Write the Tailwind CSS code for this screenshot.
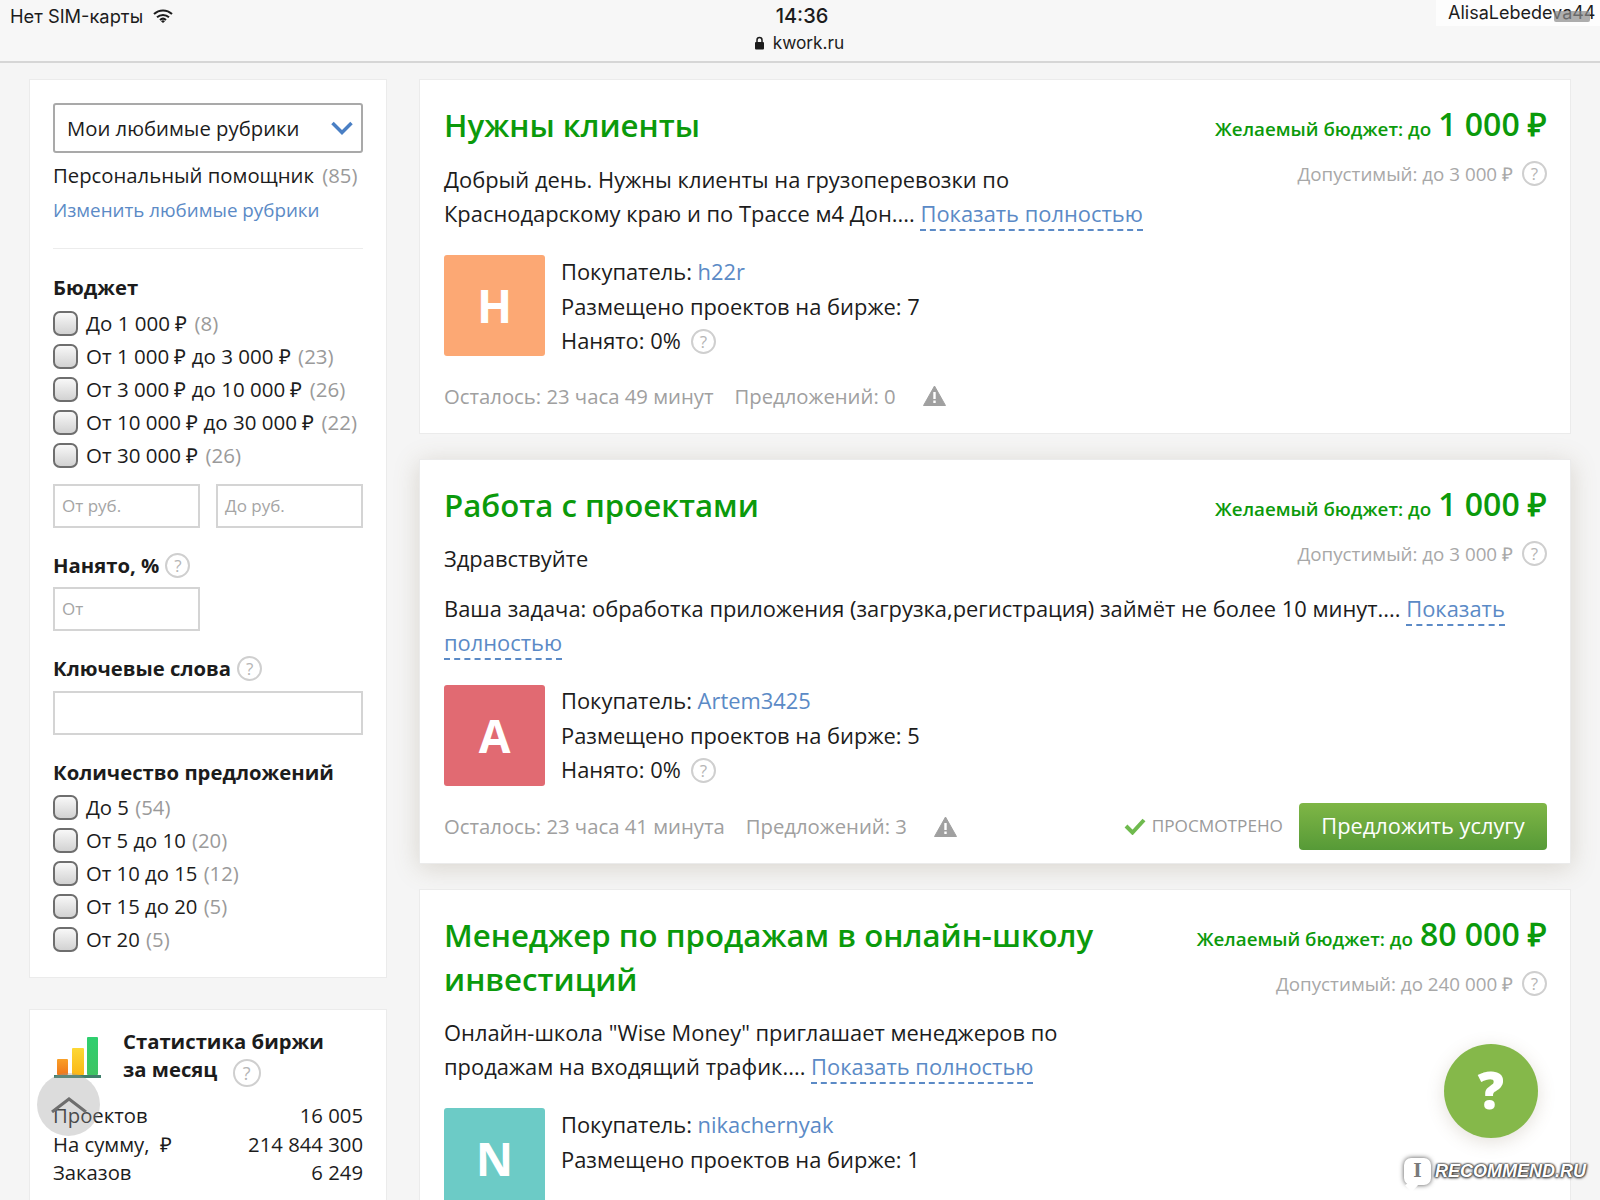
<!DOCTYPE html>
<html lang="ru">
<head>
  <meta charset="UTF-8">
  <title>Биржа проектов</title>
  <script src="https://cdn.jsdelivr.net/npm/@tailwindcss/browser@4"></script>
</head>
<body class="relative h-[1200px] w-[1600px] overflow-hidden bg-[#f5f5f5] font-['Open_Sans',sans-serif] text-[21.9px] leading-[34.5px] text-[#1c1c1c]">

  <!-- Safari status bar -->
  <header class="relative h-[63px] border-b-2 border-[#d6d6d6] bg-[#f7f7f7] font-['Inter',sans-serif]">
    <div class="flex items-center gap-[10px] pl-[10px] pt-[4px] text-[18.3px] leading-[24px]">
      <span>Нет SIM-карты</span>
      <svg class="h-[14px] w-[20px]" viewBox="0 0 20 14"><path d="M1 5a13 13 0 0 1 18 0M4 8.2a9 9 0 0 1 12 0M7 11a4.5 4.5 0 0 1 6 0" fill="none" stroke="#1c1c1c" stroke-width="2"/><path d="M8 12.2a3 3 0 0 1 4 0L10 14z" fill="#1c1c1c"/></svg>
    </div>
    <div class="absolute left-[746px] top-[3px] w-[112px] text-center text-[20px] font-medium leading-[26px]">14:36</div>
    <div class="absolute left-[699px] top-[30px] flex w-[200px] items-center justify-center gap-[8px] text-[17.3px] leading-[26px]">
      <svg class="h-[14px] w-[11px]" viewBox="0 0 11 14"><path d="M3 6V4a2.5 2.5 0 0 1 5 0v2" fill="none" stroke="#1c1c1c" stroke-width="1.5"/><rect x="1" y="6" width="9" height="7.5" rx="1" fill="#1c1c1c"/></svg>
      <span>kwork.ru</span>
    </div>
    <div class="absolute left-[1436px] top-0 w-[164px] bg-white/70 pl-[12px] text-[18px] leading-[26px]">AlisaLebedeva44</div>
    <div class="absolute left-[1554px] top-[11px] h-[11px] w-[36px] rounded-[2px] bg-[#8a8a8a]/70"></div>
  </header>

  <div class="flex items-start gap-[32px] pl-[29px] pt-[16px]">

    <!-- Sidebar -->
    <aside class="w-[358px] shrink-0 text-[20.3px]">
      <section class="h-[899px] border border-[#ebebeb] bg-white px-[23px] pt-[23px]">
        <div class="flex h-[50px] items-center justify-between rounded-[3px] border-2 border-[#a9a9a9] pl-[12px] pr-[8px]">
          <span>Мои любимые рубрики</span>
          <svg class="h-[14px] w-[22px]" viewBox="0 0 22 14"><path d="M1.5 2 11 11.5 20.5 2" fill="none" stroke="#4a7fc4" stroke-width="3.5"/></svg>
        </div>
        <div class="mt-[5px]">Персональный помощник <span class="ml-[3px] text-[#9a9a9a]">(85)</span></div>
        <a class="block text-[18.8px] leading-[35px] text-[#5b8ac6]">Изменить любимые рубрики</a>
        <hr class="mt-[20px] border-[#ececec]">

        <h3 class="mt-[21px] font-bold leading-[35px]">Бюджет</h3>
        <div class="mt-[2px] flex flex-col text-[20.5px]">
          <label class="flex h-[33px] items-center gap-[8px]"><span class="h-[25px] w-[25px] rounded-[7px] border-2 border-[#6e6e6e] bg-gradient-to-b from-[#f8f8f8] to-[#d2d2d2]"></span><span>До 1 000 ₽ <span class="ml-[2px] text-[#9a9a9a]">(8)</span></span></label>
          <label class="flex h-[33px] items-center gap-[8px]"><span class="h-[25px] w-[25px] rounded-[7px] border-2 border-[#6e6e6e] bg-gradient-to-b from-[#f8f8f8] to-[#d2d2d2]"></span><span>От 1 000 ₽ до 3 000 ₽ <span class="ml-[2px] text-[#9a9a9a]">(23)</span></span></label>
          <label class="flex h-[33px] items-center gap-[8px]"><span class="h-[25px] w-[25px] rounded-[7px] border-2 border-[#6e6e6e] bg-gradient-to-b from-[#f8f8f8] to-[#d2d2d2]"></span><span>От 3 000 ₽ до 10 000 ₽ <span class="ml-[2px] text-[#9a9a9a]">(26)</span></span></label>
          <label class="flex h-[33px] items-center gap-[8px]"><span class="h-[25px] w-[25px] rounded-[7px] border-2 border-[#6e6e6e] bg-gradient-to-b from-[#f8f8f8] to-[#d2d2d2]"></span><span>От 10 000 ₽ до 30 000 ₽ <span class="ml-[2px] text-[#9a9a9a]">(22)</span></span></label>
          <label class="flex h-[33px] items-center gap-[8px]"><span class="h-[25px] w-[25px] rounded-[7px] border-2 border-[#6e6e6e] bg-gradient-to-b from-[#f8f8f8] to-[#d2d2d2]"></span><span>От 30 000 ₽ <span class="ml-[2px] text-[#9a9a9a]">(26)</span></span></label>
        </div>
        <div class="mt-[12px] flex gap-[16px]">
          <div class="h-[44px] w-[147px] border-2 border-[#d4d4d4] pl-[7px] text-[17px] leading-[40px] text-[#a5a5a5]">От руб.</div>
          <div class="h-[44px] w-[147px] border-2 border-[#d4d4d4] pl-[7px] text-[17px] leading-[40px] text-[#a5a5a5]">До руб.</div>
        </div>

        <h3 class="mt-[20px] flex items-center gap-[6px] font-bold leading-[35px]">Нанято, %
          <span class="h-[25px] w-[25px] rounded-full border-2 border-[#cfcfcf] text-center text-[17px] font-normal leading-[21px] text-[#b5b5b5]">?</span>
        </h3>
        <div class="mt-[4px] h-[44px] w-[147px] border-2 border-[#d4d4d4] pl-[7px] text-[17px] leading-[40px] text-[#a5a5a5]">От</div>

        <h3 class="mt-[20px] flex items-center gap-[6px] font-bold leading-[35px]">Ключевые слова
          <span class="h-[25px] w-[25px] rounded-full border-2 border-[#cfcfcf] text-center text-[17px] font-normal leading-[21px] text-[#b5b5b5]">?</span>
        </h3>
        <div class="mt-[5px] h-[44px] w-full border-2 border-[#d4d4d4]"></div>

        <h3 class="mt-[20px] font-bold leading-[35px]">Количество предложений</h3>
        <div class="mt-[1px] flex flex-col">
          <label class="flex h-[33px] items-center gap-[8px]"><span class="h-[25px] w-[25px] rounded-[7px] border-2 border-[#6e6e6e] bg-gradient-to-b from-[#f8f8f8] to-[#d2d2d2]"></span><span>До 5 <span class="ml-[1px] text-[#9a9a9a]">(54)</span></span></label>
          <label class="flex h-[33px] items-center gap-[8px]"><span class="h-[25px] w-[25px] rounded-[7px] border-2 border-[#6e6e6e] bg-gradient-to-b from-[#f8f8f8] to-[#d2d2d2]"></span><span>От 5 до 10 <span class="ml-[1px] text-[#9a9a9a]">(20)</span></span></label>
          <label class="flex h-[33px] items-center gap-[8px]"><span class="h-[25px] w-[25px] rounded-[7px] border-2 border-[#6e6e6e] bg-gradient-to-b from-[#f8f8f8] to-[#d2d2d2]"></span><span>От 10 до 15 <span class="ml-[1px] text-[#9a9a9a]">(12)</span></span></label>
          <label class="flex h-[33px] items-center gap-[8px]"><span class="h-[25px] w-[25px] rounded-[7px] border-2 border-[#6e6e6e] bg-gradient-to-b from-[#f8f8f8] to-[#d2d2d2]"></span><span>От 15 до 20 <span class="ml-[1px] text-[#9a9a9a]">(5)</span></span></label>
          <label class="flex h-[33px] items-center gap-[8px]"><span class="h-[25px] w-[25px] rounded-[7px] border-2 border-[#6e6e6e] bg-gradient-to-b from-[#f8f8f8] to-[#d2d2d2]"></span><span>От 20 <span class="ml-[1px] text-[#9a9a9a]">(5)</span></span></label>
        </div>
      </section>

      <!-- Exchange stats -->
      <section class="mt-[31px] h-[300px] border border-[#ebebeb] bg-white px-[23px] pt-[17px]">
        <div class="flex gap-[22px]">
          <svg class="ml-[1px] mt-[10px] h-[41px] w-[47px] shrink-0" viewBox="0 0 47 41">
            <defs>
              <linearGradient id="barOrange" x1="0" y1="0" x2="0" y2="1"><stop offset="0" stop-color="#f9a028"/><stop offset="1" stop-color="#f0761a"/></linearGradient>
              <linearGradient id="barYellow" x1="0" y1="0" x2="0" y2="1"><stop offset="0" stop-color="#fdd835"/><stop offset="1" stop-color="#fbb716"/></linearGradient>
              <linearGradient id="barGreen" x1="0" y1="0" x2="0" y2="1"><stop offset="0" stop-color="#2fcf6f"/><stop offset="1" stop-color="#3fc463"/></linearGradient>
            </defs>
            <rect x="3" y="22" width="11" height="16" rx="1" fill="url(#barOrange)"/>
            <rect x="18" y="11" width="12" height="27" rx="1" fill="url(#barYellow)"/>
            <rect x="33" y="0" width="11" height="38" rx="1" fill="url(#barGreen)"/>
            <rect x="0" y="38" width="47" height="3" fill="#3f7f6b"/>
          </svg>
          <h3 class="font-bold leading-[28px]">Статистика биржи<br>за месяц
            <span class="ml-[10px] inline-block h-[28px] w-[28px] translate-y-[3px] rounded-full border-2 border-[#cfcfcf] text-center text-[18px] font-normal leading-[24px] text-[#b5b5b5]">?</span>
          </h3>
        </div>
        <div class="mt-[17px] leading-[28.5px]">
          <div class="flex justify-between"><span>Проектов</span><span>16 005</span></div>
          <div class="flex justify-between"><span>На сумму, &nbsp;₽</span><span>214 844 300</span></div>
          <div class="flex justify-between"><span>Заказов</span><span>6 249</span></div>
        </div>
      </section>
    </aside>

    <!-- Project list -->
    <main class="flex w-[1152px] shrink-0 flex-col">

      <article class="h-[355px] border border-[#ebebeb] bg-white pl-[24px] pr-[23px] pt-[23px]">
        <div class="flex items-start justify-between">
          <div class="w-[710px]">
            <h2 class="text-[31.2px] font-semibold leading-[44px] text-[#0b9a0b]">Нужны клиенты</h2>
            <p class="mt-[16px] leading-[34px]">Добрый день. Нужны клиенты на грузоперевозки по Краснодарскому краю и по Трассе м4 Дон.... <a class="border-b-2 border-dashed border-[#5b8ac6] pb-[1px] text-[#5b8ac6]">Показать полностью</a></p>
          </div>
          <div class="flex flex-col items-end">
            <div class="flex items-baseline gap-[7px] font-semibold text-[#0b9a0b]"><span class="text-[18.8px]">Желаемый бюджет: до</span><span class="text-[32px] leading-[42px]">1 000 ₽</span></div>
            <div class="mt-[13px] flex items-center gap-[9px] text-[18.8px] leading-[28px] text-[#a8a8a8]">Допустимый: до 3 000 ₽
              <span class="h-[25px] w-[25px] rounded-full border-2 border-[#cfcfcf] text-center text-[17px] leading-[21px] text-[#b5b5b5]">?</span>
            </div>
          </div>
        </div>
        <div class="mt-[24px] flex gap-[16px]">
          <div class="flex h-[101px] w-[101px] items-center justify-center rounded-[3px] bg-[#fca874] text-[46px] font-bold text-white">H</div>
          <div>
            <div>Покупатель: <a class="text-[#5b8ac6]">h22r</a></div>
            <div>Размещено проектов на бирже: 7</div>
            <div class="flex items-center gap-[10px]">Нанято: 0%
              <span class="h-[25px] w-[25px] rounded-full border-2 border-[#cfcfcf] text-center text-[17px] leading-[21px] text-[#b5b5b5]">?</span>
            </div>
          </div>
        </div>
        <div class="mt-[20px] flex items-center text-[20.3px] text-[#a0a0a0]">
          <span>Осталось: 23 часа 49 минут</span>
          <span class="ml-[21px]">Предложений: 0</span>
          <svg class="ml-[27px] h-[21px] w-[23px]" viewBox="0 0 23 21"><path d="M11.5 1 22.5 20.5H.5z" fill="#a0a0a0" stroke="#a0a0a0" stroke-linejoin="round"/><rect x="10.3" y="7" width="2.4" height="7" fill="#fff"/><rect x="10.3" y="15.5" width="2.4" height="2.5" fill="#fff"/></svg>
        </div>
      </article>

      <article class="mt-[25px] h-[405px] border border-[#ebebeb] bg-white pl-[24px] pr-[23px] pt-[23px] shadow-[0_4px_24px_rgba(120,100,70,0.22)]">
        <div class="flex items-start justify-between">
          <h2 class="text-[31.2px] font-semibold leading-[44px] text-[#0b9a0b]">Работа с проектами</h2>
          <div class="flex flex-col items-end">
            <div class="flex items-baseline gap-[7px] font-semibold text-[#0b9a0b]"><span class="text-[18.8px]">Желаемый бюджет: до</span><span class="text-[32px] leading-[42px]">1 000 ₽</span></div>
            <div class="mt-[13px] flex items-center gap-[9px] text-[18.8px] leading-[28px] text-[#a8a8a8]">Допустимый: до 3 000 ₽
              <span class="h-[25px] w-[25px] rounded-full border-2 border-[#cfcfcf] text-center text-[17px] leading-[21px] text-[#b5b5b5]">?</span>
            </div>
          </div>
        </div>
        <p class="-mt-[26px]">Здравствуйте</p>
        <p class="mt-[16px] leading-[34px]">Ваша задача: обработка приложения (загрузка,регистрация) займёт не более 10 минут.... <a class="border-b-2 border-dashed border-[#5b8ac6] pb-[1px] text-[#5b8ac6]">Показать полностью</a></p>
        <div class="mt-[25px] flex gap-[16px]">
          <div class="flex h-[101px] w-[101px] items-center justify-center rounded-[3px] bg-[#e16a72] text-[46px] font-bold text-white">A</div>
          <div class="-mt-[1px]">
            <div>Покупатель: <a class="text-[#5b8ac6]">Artem3425</a></div>
            <div>Размещено проектов на бирже: 5</div>
            <div class="flex items-center gap-[10px]">Нанято: 0%
              <span class="h-[25px] w-[25px] rounded-full border-2 border-[#cfcfcf] text-center text-[17px] leading-[21px] text-[#b5b5b5]">?</span>
            </div>
          </div>
        </div>
        <div class="mt-[15px] flex items-center text-[20.3px] text-[#a0a0a0]">
          <span>Осталось: 23 часа 41 минута</span>
          <span class="ml-[21px]">Предложений: 3</span>
          <svg class="ml-[27px] h-[21px] w-[23px]" viewBox="0 0 23 21"><path d="M11.5 1 22.5 20.5H.5z" fill="#a0a0a0" stroke="#a0a0a0" stroke-linejoin="round"/><rect x="10.3" y="7" width="2.4" height="7" fill="#fff"/><rect x="10.3" y="15.5" width="2.4" height="2.5" fill="#fff"/></svg>
          <div class="ml-auto flex items-center gap-[6px] text-[17.2px] text-[#9a9a9a]">
            <svg class="h-[18px] w-[22px]" viewBox="0 0 22 18"><path d="M2 9l6.5 6.5L20 3" fill="none" stroke="#6fba4e" stroke-width="4"/></svg>
            ПРОСМОТРЕНО
          </div>
          <button class="ml-[16px] h-[47px] w-[248px] rounded-[4px] bg-gradient-to-b from-[#7fb646] to-[#569a37] text-[21.8px] text-white">Предложить услугу</button>
        </div>
      </article>

      <article class="mt-[25px] h-[340px] border border-[#ebebeb] bg-white pl-[24px] pr-[23px] pt-[23px]">
        <div class="flex items-start justify-between">
          <div class="w-[710px]">
            <h2 class="text-[31.2px] font-semibold leading-[44px] text-[#0b9a0b]">Менеджер по продажам в онлайн-школу инвестиций</h2>
            <p class="mt-[15px] leading-[34px]">Онлайн-школа "Wise Money" приглашает менеджеров по продажам на входящий трафик.... <a class="border-b-2 border-dashed border-[#5b8ac6] pb-[1px] text-[#5b8ac6]">Показать полностью</a></p>
          </div>
          <div class="flex flex-col items-end">
            <div class="flex items-baseline gap-[7px] font-semibold text-[#0b9a0b]"><span class="text-[18.8px]">Желаемый бюджет: до</span><span class="text-[32px] leading-[42px]">80 000 ₽</span></div>
            <div class="mt-[13px] flex items-center gap-[9px] text-[18.8px] leading-[28px] text-[#a8a8a8]">Допустимый: до 240 000 ₽
              <span class="h-[25px] w-[25px] rounded-full border-2 border-[#cfcfcf] text-center text-[17px] leading-[21px] text-[#b5b5b5]">?</span>
            </div>
          </div>
        </div>
        <div class="mt-[24px] flex gap-[16px]">
          <div class="flex h-[101px] w-[101px] items-center justify-center rounded-[3px] bg-[#6ccbc6] text-[46px] font-bold text-white">N</div>
          <div>
            <div>Покупатель: <a class="text-[#5b8ac6]">nikachernyak</a></div>
            <div>Размещено проектов на бирже: 1</div>
          </div>
        </div>
      </article>
    </main>
  </div>

  <!-- Floating controls over the page -->
  <div class="absolute left-[37px] top-[1073px] flex h-[63px] w-[63px] items-center justify-center rounded-full bg-[#9a9a9a]/35">
    <svg class="h-[16px] w-[38px]" viewBox="0 0 38 16"><path d="M2 15 19 2l17 13" fill="none" stroke="#6e6e6e" stroke-width="3"/></svg>
  </div>
  <div class="absolute left-[1444px] top-[1044px] flex h-[94px] w-[94px] items-center justify-center rounded-full bg-[#85b84a] pb-[4px] text-[52px] font-extrabold text-white shadow-[0_4px_18px_rgba(120,100,70,0.2)]">?</div>

  <!-- Watermark -->
  <div class="absolute left-[1404px] top-[1157px] flex items-center gap-[4px]">
    <div class="relative flex h-[27px] w-[27px] items-center justify-center rounded-[7px] bg-white font-['DejaVu_Serif',serif] text-[18px] font-bold leading-none text-[#7a7a7a] shadow-[0_0_5px_rgba(0,0,0,0.7)]">
      I
      <span class="absolute -bottom-[5px] left-[3px] h-[9px] w-[9px] rotate-45 bg-white"></span>
    </div>
    <div class="font-['Liberation_Sans',sans-serif] text-[18px] font-bold italic leading-[28px] text-white [text-shadow:0_0_2px_#444,0_1px_3px_#444,1px_0_2px_#444,-1px_0_2px_#444]">RECOMMEND.RU</div>
  </div>
</body>
</html>
